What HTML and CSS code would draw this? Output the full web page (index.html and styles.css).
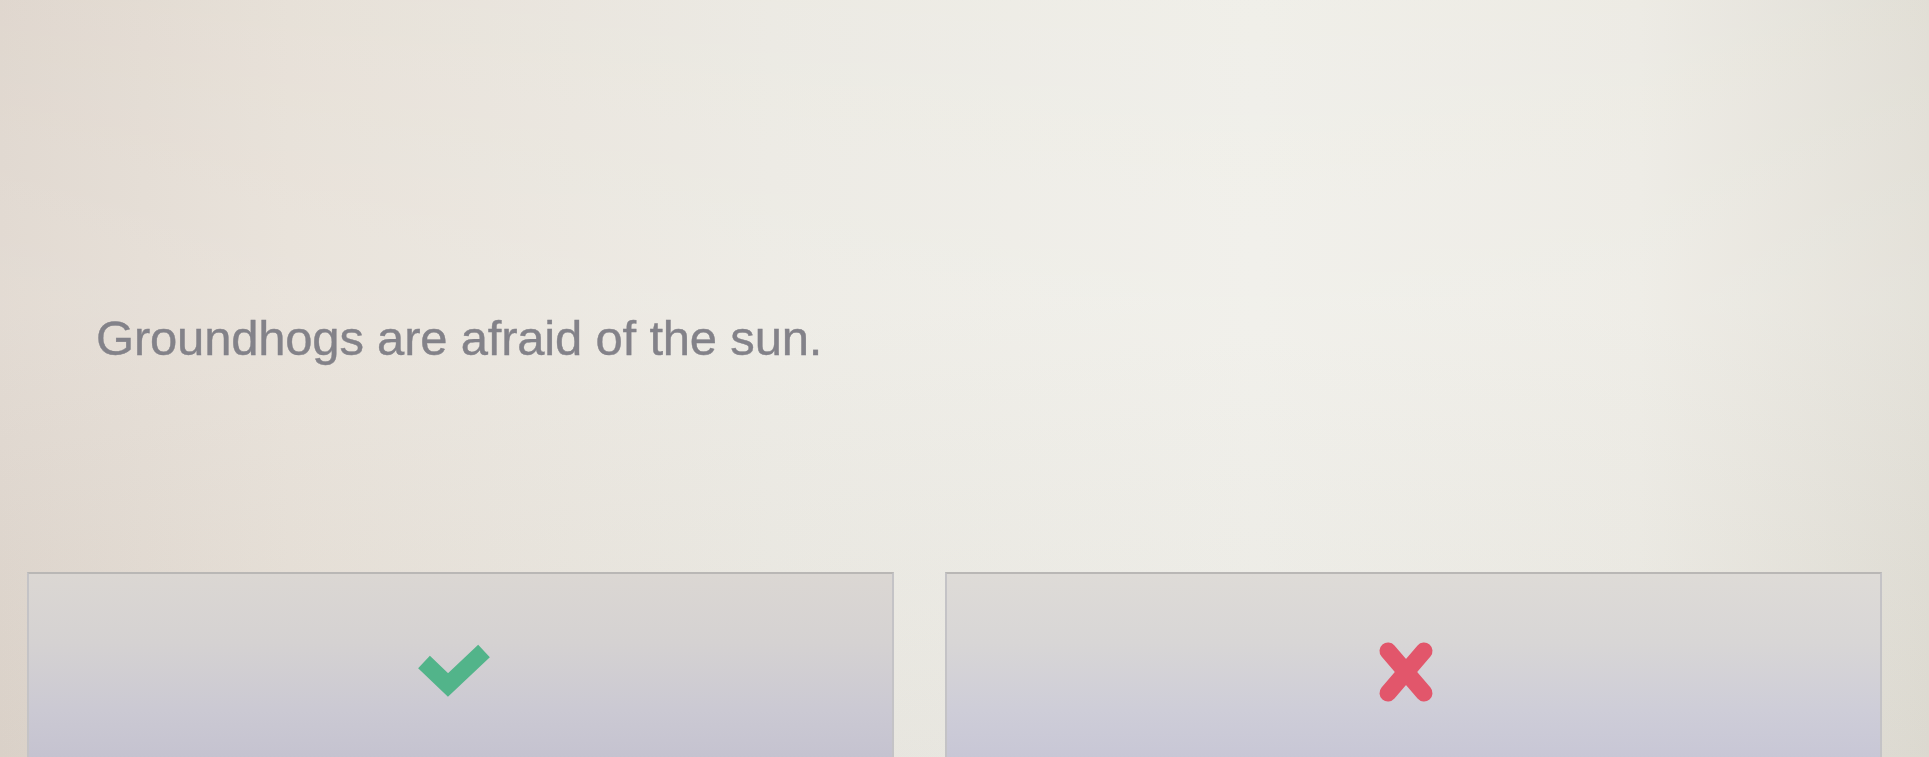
FILE: index.html
```html
<!DOCTYPE html>
<html lang="en">
<head>
<meta charset="utf-8">
<title>True or false</title>
<link rel="stylesheet" href="styles.css">
</head>
<body>
<main class="page">
  <p class="statement">Groundhogs are afraid of the sun.</p>
  <div class="answers">
    <button class="answer answer-true" type="button" aria-label="True">
      <svg class="icon icon-check" viewBox="0 0 72 50" width="72" height="50" aria-hidden="true">
        <polyline points="6,18 30,41 66,7" fill="none" stroke="#52b48a" stroke-width="17" stroke-linejoin="miter" stroke-miterlimit="4" stroke-linecap="butt"/>
      </svg>
    </button>
    <button class="answer answer-false" type="button" aria-label="False">
      <svg class="icon icon-cross" viewBox="0 0 56 60" width="56" height="60" aria-hidden="true">
        <line x1="10" y1="9" x2="46" y2="51" stroke="#e2566b" stroke-width="17" stroke-linecap="round"/>
        <line x1="46" y1="9" x2="10" y2="51" stroke="#e2566b" stroke-width="17" stroke-linecap="round"/>
      </svg>
    </button>
  </div>
</main>
</body>
</html>
```
FILE: styles.css
```css
html, body {
  margin: 0;
  height: 757px;
  overflow: hidden;
}

body {
  background:
    linear-gradient(to bottom, rgba(255,255,255,0.05) 0%, rgba(255,255,255,0.15) 40%, rgba(0,0,0,0.02) 100%),
    linear-gradient(to right, #ded5cc 0%, #e6dfd6 15%, #ebe9e2 40%, #efeee8 65%, #eceae3 85%, #e0ddd4 100%);
  font-family: "Liberation Sans", Arial, Helvetica, sans-serif;
}

.page {
  display: flex;
  flex-direction: column;
  padding: 310px 0 0 0;
}

.statement {
  margin: 0 0 0 96px;
  font-size: 49px;
  line-height: 56px;
  color: #838289;
  letter-spacing: -0.2px;
  -webkit-text-stroke: 0.4px #838289;
}

.answers {
  display: grid;
  grid-template-columns: 867px 937px;
  column-gap: 51px;
  margin: 206px 0 0 27px;
}

.answer {
  height: 200px;
  margin: 0;
  padding: 70px 0 0 0;
  display: flex;
  justify-content: center;
  align-items: flex-start;
  border: 2px solid #c4c3c6;
  border-top-color: #b9b7b5;
  border-radius: 0;
  background: linear-gradient(to bottom, #dedbd7 0%, #d8d6d6 35%, #cecdd8 70%, #c6c5d5 100%);
  cursor: pointer;
}

.answer-true {
  background: linear-gradient(to bottom, #dbd7d3 0%, #d5d2d2 35%, #cbc9d3 70%, #c3c1cf 100%);
}

.answer-true .icon {
  margin-left: -14px;
}

.answer-false {
  padding-top: 68px;
}

.answer-false .icon {
  margin-left: -16px;
}

.icon {
  display: block;
  overflow: visible;
}
```
